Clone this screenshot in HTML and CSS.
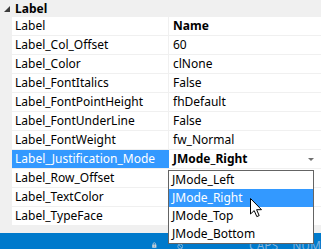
FILE: index.html
```html
<!DOCTYPE html>
<html>
<head>
<title>Properties</title>
<link rel="stylesheet" href="styles.css">
</head>
<body>

<div class="grid">
	<div class="cat">
		<span class="tri"></span>
		<span class="catname">Label</span>
	</div>
	<div class="row"><div class="gut"></div><div class="nm">Label</div><div class="vl b">Name</div></div>
	<div class="row"><div class="gut"></div><div class="nm">Label_Col_Offset</div><div class="vl">60</div></div>
	<div class="row"><div class="gut"></div><div class="nm">Label_Color</div><div class="vl">clNone</div></div>
	<div class="row"><div class="gut"></div><div class="nm">Label_FontItalics</div><div class="vl">False</div></div>
	<div class="row"><div class="gut"></div><div class="nm">Label_FontPointHeight</div><div class="vl">fhDefault</div></div>
	<div class="row"><div class="gut"></div><div class="nm">Label_FontUnderLine</div><div class="vl">False</div></div>
	<div class="row"><div class="gut"></div><div class="nm">Label_FontWeight</div><div class="vl">fw_Normal</div></div>
	<div class="row sel"><div class="gut"></div><div class="nm">Label_Justification_Mode</div><div class="vl b">JMode_Right<span class="arr"></span></div></div>
	<div class="row"><div class="gut"></div><div class="nm">Label_Row_Offset</div><div class="vl"></div></div>
	<div class="row"><div class="gut"></div><div class="nm">Label_TextColor</div><div class="vl"></div></div>
	<div class="row"><div class="gut"></div><div class="nm">Label_TypeFace</div><div class="vl"></div></div>
	<div class="filler"></div>
	<div class="status">
		<svg class="lock" width="10" height="12" viewBox="0 0 10 12">
			<rect x="0.5" y="5" width="9" height="7" fill="#c9d3dc"/>
			<path d="M2.5 5.5 V3.5 a2.5 2.5 0 0 1 5 0 V5.5" fill="none" stroke="#c9d3dc" stroke-width="1.6"/>
			<rect x="4" y="7" width="2" height="3" fill="#7d97ad"/>
		</svg>
		<svg class="noicon" width="14" height="12" viewBox="0 0 14 12">
			<circle cx="7" cy="7" r="5.2" fill="none" stroke="#a7c2da" stroke-width="1.6"/>
			<path d="M3.3 3.3 L10.7 10.7" stroke="#a7c2da" stroke-width="1.6"/>
		</svg>
		<span class="caps">CAPS</span>
		<span class="num">NUM</span>
	</div>
</div>

<ul class="drop">
	<li>JMode_Left</li>
	<li class="on">JMode_Right</li>
	<li>JMode_Top</li>
	<li>JMode_Bottom</li>
</ul>

<svg class="cursor" width="13" height="20" viewBox="0 0 13 20">
	<path d="M0.5 0.5 L0.5 16 L4.2 12.6 L6.8 18.6 L9.2 17.6 L6.6 11.7 L11.5 11.7 Z" fill="#fff" stroke="#000" stroke-width="1"/>
</svg>

</body>
</html>
```

FILE: styles.css
```css
body {
	margin: 0px;
	padding: 0px;
	width: 321px;
	height: 249px;
	overflow: hidden;
	position: relative;
	background-color: #FFF;
	font-family: "Noto Sans", "Open Sans", sans-serif;
	font-size: 12px;
	color: #000;
}

.grid {
	display: flex;
	flex-direction: column;
}

.cat {
	height: 17px;
	background-color: #f0f0f0;
	display: flex;
	align-items: center;
}

.tri {
	width: 0;
	height: 0;
	margin: 0px 5px 0px 4px;
	border-left: 6px solid transparent;
	border-bottom: 6px solid #3c3c3c;
}

.catname {
	font-weight: bold;
}

.row {
	height: 18px;
	display: flex;
	border-bottom: 1px solid #f0f0f0;
	line-height: 18px;
}

.gut {
	width: 12px;
	background-color: #f0f0f0;
}

.nm {
	width: 153px;
	padding-left: 3px;
	border-right: 1px solid #f0f0f0;
	white-space: nowrap;
}

.vl {
	flex: 1;
	padding-left: 4px;
	position: relative;
	white-space: nowrap;
}

.b {
	font-weight: bold;
}

.sel .nm {
	background-color: #3399ff;
	color: #FFF;
	border-right-color: #3399ff;
}

.arr {
	position: absolute;
	right: 7px;
	top: 8px;
	border-left: 3px solid transparent;
	border-right: 3px solid transparent;
	border-top: 3px solid #707070;
}

.filler {
	height: 7px;
	background-color: #f0f0f0;
}

.status {
	height: 16px;
	background-color: #007acc;
	display: flex;
	align-items: flex-start;
	color: #7fb3de;
	font-size: 12px;
	line-height: 14px;
	padding-left: 152px;
	padding-top: 6px;
	box-sizing: border-box;
	overflow: hidden;
}

.noicon {
	margin-left: 20px;
	margin-top: 1px;
}

.caps {
	margin-left: 66px;
}

.num {
	margin-left: 14px;
}

.drop {
	position: absolute;
	left: 168px;
	top: 170px;
	width: 144px;
	margin: 0px;
	padding: 0px;
	list-style: none;
	background-color: #FFF;
	border: 1px solid #646464;
}

.drop li {
	height: 18px;
	line-height: 18px;
	padding-left: 3px;
}

.drop li.on {
	background-color: #3399ff;
	color: #FFF;
}

.cursor {
	position: absolute;
	left: 250px;
	top: 198px;
}
```
